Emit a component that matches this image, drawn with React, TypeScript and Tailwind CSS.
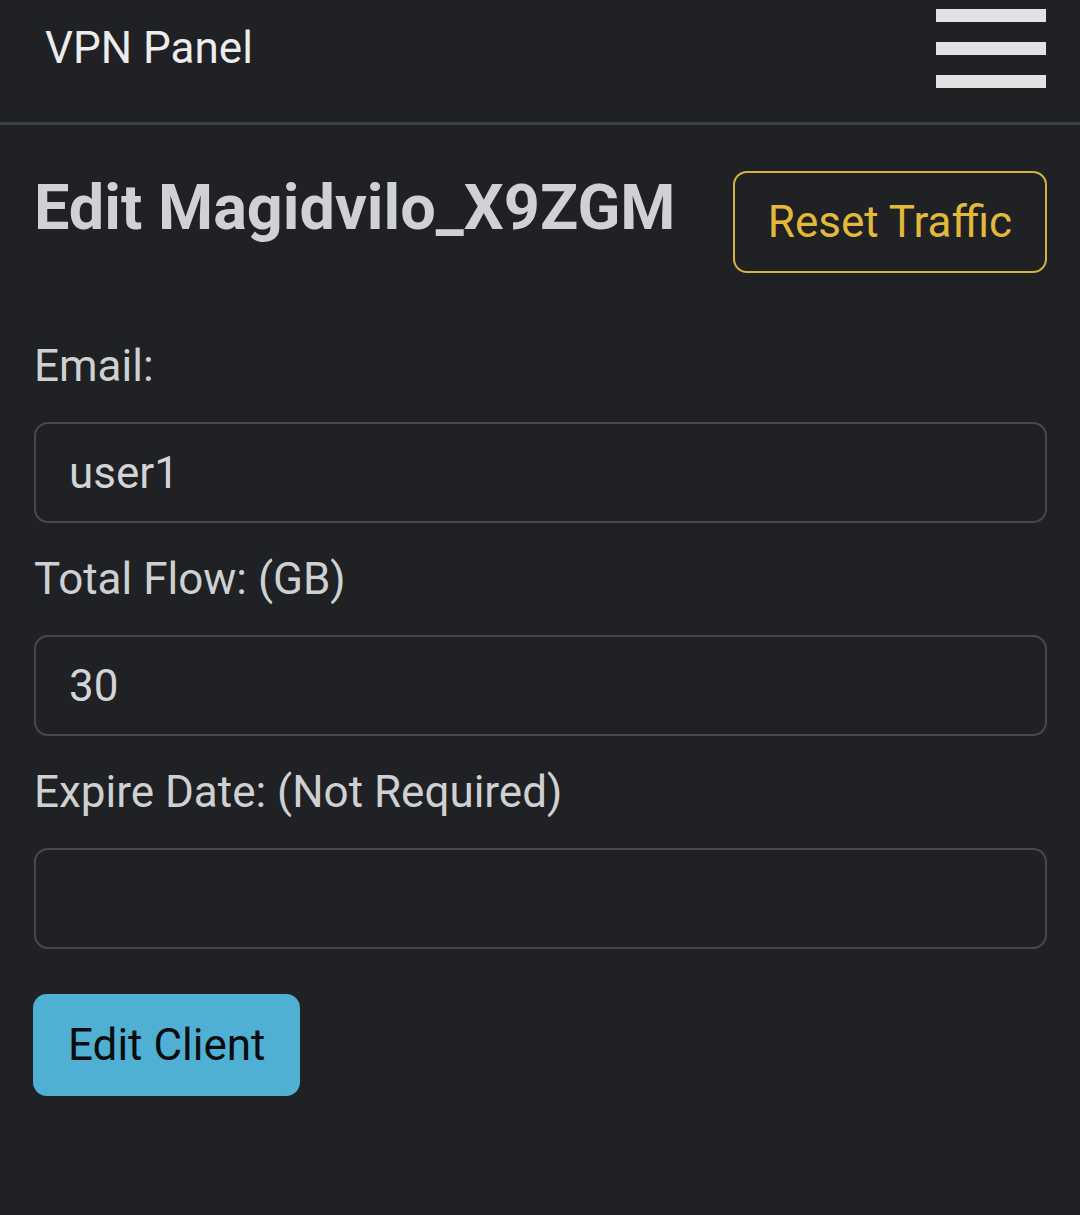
import { useState } from "react";

function Field({ label, value, onChange }: { label: string; value: string; onChange: (v: string) => void }) {
  return (
    <div className="mb-[22px]">
      <label className="block text-[44px] leading-[69px] text-[#cfd0d2] mb-[21px]">{label}</label>
      <input
        value={value}
        onChange={(e) => onChange(e.target.value)}
        className="block w-full h-[101px] rounded-[14px] border-[2px] border-[#47494c] bg-[#1f2124] px-[33px] text-[44px] text-[#d3d4d6] outline-none"
      />
    </div>
  );
}

export default function App() {
  const [email, setEmail] = useState("user1");
  const [flow, setFlow] = useState("30");
  const [expire, setExpire] = useState("");

  return (
    <div className="min-h-[1215px] bg-[#1f2124] font-['Roboto',sans-serif]">
      <header className="h-[125px] border-b-[3px] border-[#3b3e42] flex items-start justify-between pl-[45px] pr-[34px]">
        <span className="mt-[20px] text-[44px] leading-[56px] text-[#ececec]">VPN Panel</span>
        <button className="mt-[9px] flex flex-col gap-[20px]" aria-label="Menu">
          <span className="block w-[110px] h-[13px] bg-[#e2e2e2]" />
          <span className="block w-[110px] h-[13px] bg-[#e2e2e2]" />
          <span className="block w-[110px] h-[13px] bg-[#e2e2e2]" />
        </button>
      </header>

      <main className="pl-[34px] pr-[33px] pt-[46px]">
        <div className="flex items-start justify-between mb-[59px]">
          <h2 className="-mt-[3px] text-[63px] leading-[79px] font-bold text-[#d0d1d3]">Edit Magidvilo_X9ZGM</h2>
          <button className="h-[102px] px-[33px] rounded-[14px] border-[2px] border-[#d8b23c] text-[44px] text-[#e3b93a]">
            Reset Traffic
          </button>
        </div>

        <Field label="Email:" value={email} onChange={setEmail} />
        <Field label="Total Flow: (GB)" value={flow} onChange={setFlow} />
        <Field label="Expire Date: (Not Required)" value={expire} onChange={setExpire} />

        <button className="-ml-[1px] mt-[23px] h-[102px] px-[35px] rounded-[14px] bg-[#4fb0d4] text-[44px] text-[#0b0c0d]">
          Edit Client
        </button>
      </main>
    </div>
  );
}
